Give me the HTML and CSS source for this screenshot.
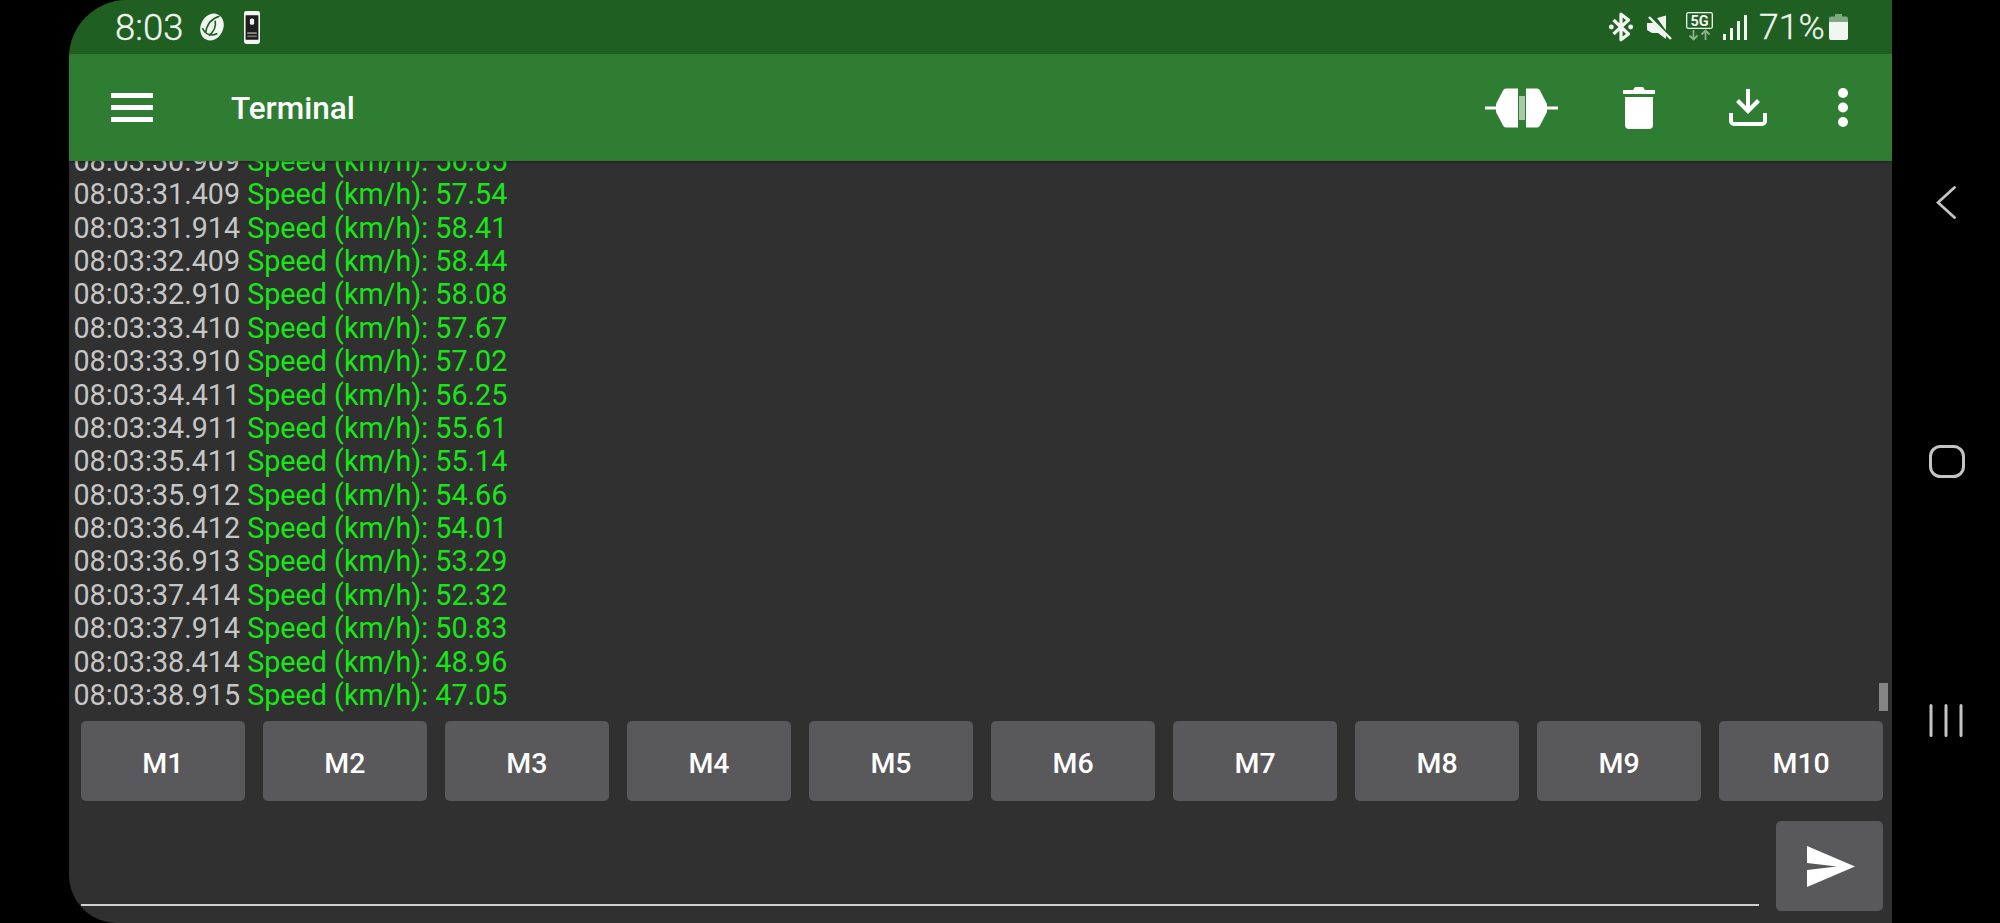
FILE: index.html
```
<!DOCTYPE html>
<html lang="en">
<head>
<meta charset="utf-8">
<title>Terminal</title>
<link rel="stylesheet" href="styles.css">
</head>
<body>
<div class="device">
  <main class="screen">
    <div class="statusbar">
      <span class="clock">8:03</span>
      <svg class="ic-leaf" viewBox="0 0 24 28"><ellipse cx="12" cy="14" rx="10.500" ry="13" transform="rotate(25 12 14)" fill="#f2f6f0"/><path d="M19 4C12 6 7 11 6 20M15 8c1 6-2 11-6 14M3 15c3 6 8 8 14 5" fill="none" stroke="#1f5f22" stroke-width="1.500"/></svg>
      <svg class="ic-phone" viewBox="0 0 15 31"><rect width="15" height="31" rx="2" fill="#f4f4f2"/><rect x="1.500" y="4" width="12" height="23" fill="#1d1d1d"/><rect x="5.500" y="7" width="4" height="6" rx="1.500" fill="#eee"/><rect x="3" y="20" width="9" height="1.500" fill="#999"/><rect x="3" y="23" width="9" height="1.500" fill="#777"/></svg>
      <span class="status-spacer"></span>
      <svg class="ic-bt" viewBox="0 0 24 28"><path d="M5 7.500l14 13-7 5.500V2l7 5.500L5 20.500" fill="none" stroke="#f2f6f0" stroke-width="3" stroke-linejoin="round"/><circle cx="3" cy="14" r="2.300" fill="#f2f6f0"/><circle cx="21" cy="14" r="2.300" fill="#f2f6f0"/></svg>
      <svg class="ic-mute" viewBox="0 0 25 25"><path d="M0 8h5L6 7l13 13v4l-8-6H5l-5-3zM10 3l9-2.500v15z" fill="#f2f6f0"/><path d="M2 2l22 22" stroke="#f2f6f0" stroke-width="2.400"/></svg>
      <svg class="ic-5g" viewBox="0 0 27 29"><rect x=".7" y=".7" width="25.600" height="15.600" rx="1.500" fill="none" stroke="#f2f6f0" stroke-width="1.300"/><text x="13.500" y="14" text-anchor="middle" class="fiveg">5G</text><path d="M7.500 18v9M3.500 23.500l4 4 4-4M19.500 28v-9M15.500 22.500l4-4 4 4" fill="none" stroke="#8db28e" stroke-width="1.800"/></svg>
      <svg class="ic-signal" viewBox="0 0 24 25"><rect x="0" y="19" width="3" height="6" fill="#f2f6f0"/><rect x="7" y="13" width="3" height="12" fill="#f2f6f0"/><rect x="14" y="6" width="3" height="19" fill="#f2f6f0"/><rect x="21" y="0" width="3" height="25" fill="#f2f6f0"/></svg>
      <span class="battery-text">71%</span>
      <svg class="ic-battery" viewBox="0 0 19 26"><path d="M6 0h7v2.500h4a2 2 0 0 1 2 2V8H0V4.500a2 2 0 0 1 2-2h4z" fill="#7fa981"/><path d="M0 8h19v16a2 2 0 0 1-2 2H2a2 2 0 0 1-2-2z" fill="#f2f6f0"/></svg>
    </div>
    <header class="toolbar">
      <svg class="ic-menu" viewBox="0 0 42 29"><path d="M0 0h42v5H0zM0 12h42v5H0zM0 24h42v5H0z" fill="#fff"/></svg>
      <h1 class="title">Terminal</h1>
      <span class="status-spacer"></span>
      <svg class="ic-connect" viewBox="0 0 73 40"><path d="M0 18.500h11v3H0zM62 18.500h11v3H62z" fill="#fff"/><path d="M11 16l7-13.500q1-2 3-2h12v39H21q-2 0-3-2L11 24zM62 16L55 2.500q-1-2-3-2H41v39h11q2 0 3-2l7-13.500z" fill="#fff"/><rect x="34" y="8" width="6" height="24" fill="#a7c8a9"/></svg>
      <svg class="ic-trash" viewBox="0 0 32 42"><path d="M0 3h10l2-3h8l2 3h10v4H0zM2 10h28v28a4 4 0 0 1-4 4H6a4 4 0 0 1-4-4z" fill="#fff"/></svg>
      <svg class="ic-download" viewBox="0 0 38 37"><path d="M17 0h4v17l7-7 3 3-12 12L7 13l3-3 7 7z" fill="#fff"/><path d="M2 24v8a3 3 0 0 0 3 3h28a3 3 0 0 0 3-3v-8" fill="none" stroke="#fff" stroke-width="4"/></svg>
      <svg class="ic-dots" viewBox="0 0 10 39"><circle cx="5" cy="5" r="5" fill="#fff"/><circle cx="5" cy="19.500" r="5" fill="#fff"/><circle cx="5" cy="34" r="5" fill="#fff"/></svg>
    </header>
    <section class="log">
      <p class="line"><span class="ts">08:03:30.909</span> <span class="msg">Speed (km/h): 56.85</span></p>
      <p class="line"><span class="ts">08:03:31.409</span> <span class="msg">Speed (km/h): 57.54</span></p>
      <p class="line"><span class="ts">08:03:31.914</span> <span class="msg">Speed (km/h): 58.41</span></p>
      <p class="line"><span class="ts">08:03:32.409</span> <span class="msg">Speed (km/h): 58.44</span></p>
      <p class="line"><span class="ts">08:03:32.910</span> <span class="msg">Speed (km/h): 58.08</span></p>
      <p class="line"><span class="ts">08:03:33.410</span> <span class="msg">Speed (km/h): 57.67</span></p>
      <p class="line"><span class="ts">08:03:33.910</span> <span class="msg">Speed (km/h): 57.02</span></p>
      <p class="line"><span class="ts">08:03:34.411</span> <span class="msg">Speed (km/h): 56.25</span></p>
      <p class="line"><span class="ts">08:03:34.911</span> <span class="msg">Speed (km/h): 55.61</span></p>
      <p class="line"><span class="ts">08:03:35.411</span> <span class="msg">Speed (km/h): 55.14</span></p>
      <p class="line"><span class="ts">08:03:35.912</span> <span class="msg">Speed (km/h): 54.66</span></p>
      <p class="line"><span class="ts">08:03:36.412</span> <span class="msg">Speed (km/h): 54.01</span></p>
      <p class="line"><span class="ts">08:03:36.913</span> <span class="msg">Speed (km/h): 53.29</span></p>
      <p class="line"><span class="ts">08:03:37.414</span> <span class="msg">Speed (km/h): 52.32</span></p>
      <p class="line"><span class="ts">08:03:37.914</span> <span class="msg">Speed (km/h): 50.83</span></p>
      <p class="line"><span class="ts">08:03:38.414</span> <span class="msg">Speed (km/h): 48.96</span></p>
      <p class="line"><span class="ts">08:03:38.915</span> <span class="msg">Speed (km/h): 47.05</span></p>
      <div class="scrollbar"></div>
    </section>
    <div class="macros">
      <button class="macro">M1</button>
      <button class="macro">M2</button>
      <button class="macro">M3</button>
      <button class="macro">M4</button>
      <button class="macro">M5</button>
      <button class="macro">M6</button>
      <button class="macro">M7</button>
      <button class="macro">M8</button>
      <button class="macro">M9</button>
      <button class="macro">M10</button>
    </div>
    <div class="composer">
      <div class="input"></div>
      <button class="send"><svg class="ic-send" viewBox="0 0 48 41"><path d="M0 0l48 20.500L0 41V24l30-3.500L0 17z" fill="#fff"/></svg></button>
    </div>
  </main>
  <nav class="navbar">
    <svg class="ic-back" viewBox="0 0 20 33"><path d="M18.500 1.500L2 16.500l16.500 15" fill="none" stroke="#c4c4c4" stroke-width="2.800" stroke-linecap="round"/></svg>
    <svg class="ic-home" viewBox="0 0 36 33"><rect x="1.500" y="1.500" width="33" height="30" rx="10" fill="none" stroke="#c4c4c4" stroke-width="3"/></svg>
    <svg class="ic-recent" viewBox="0 0 34 33"><path d="M2 1.500v30M17 1.500v30M32 1.500v30" fill="none" stroke="#c4c4c4" stroke-width="3" stroke-linecap="round"/></svg>
  </nav>
</div>
</body>
</html>
```

FILE: styles.css
```
* { box-sizing: border-box; }
html, body { margin: 0; height: 100%; background: #000; overflow: hidden; }
body { font-family: Roboto, "Noto Sans", sans-serif; }
.device { display: flex; height: 923px; padding-left: 69px; }
.screen {
  width: 1823px; height: 923px; display: flex; flex-direction: column;
  background: #303030; border-radius: 58px 0 0 48px; overflow: hidden;
}
.statusbar {
  flex: 0 0 54px; display: flex; align-items: center; background: #1f5f22;
  padding: 0 44px 0 46px; color: #f2f6f0;
}
.status-spacer { flex: 1; }
.clock { font-size: 36.500px; font-weight: 300; width: 84px; -webkit-text-stroke: .3px #f2f6f0; }
.ic-leaf { width: 26px; height: 30px; margin-right: 19px; }
.ic-phone { width: 16px; height: 33px; }
.ic-bt { width: 26px; height: 30px; }
.ic-mute { width: 25px; height: 25px; margin-left: 13px; }
.ic-5g { width: 27px; height: 29px; margin-left: 14px; margin-top: -1px; }
.fiveg { font: 700 14.500px Roboto, sans-serif; fill: #f2f6f0; }
.ic-signal { width: 24px; height: 25px; margin-left: 10px; }
.battery-text { font-size: 35.500px; font-weight: 300; margin-left: 12px; width: 70px; -webkit-text-stroke: .3px #f2f6f0; }
.ic-battery { width: 19px; height: 26px; }
.toolbar {
  flex: 0 0 107px; display: flex; align-items: center; background: #2f7d33;
  padding: 0 44px 0 42px; color: #fff; box-shadow: 0 1px 2px rgba(0,0,0,.35); z-index: 1;
}
.ic-menu { width: 42px; height: 29px; }
.title { margin: 2px 0 0 78px; font-size: 31.500px; font-weight: 500; }
.ic-connect { width: 73px; height: 40px; }
.ic-trash { width: 32px; height: 42px; margin-left: 65px; }
.ic-download { width: 38px; height: 37px; margin-left: 74px; }
.ic-dots { width: 10px; height: 39px; margin-left: 71px; }
.log {
  position: relative; height: 552px; overflow: hidden; padding: 0 0 .6px 4.500px;
  display: flex; flex-direction: column; justify-content: flex-end;
}
.line { margin: 0; flex: none; font-size: 28.700px; line-height: 33.400px; white-space: pre; height: 33.400px; }
.ts { color: #c6c6c6; }
.msg { color: #17e617; }
.scrollbar { position: absolute; right: 4px; bottom: 2px; width: 9px; height: 28px; background: #858585; }
.macros { display: grid; grid-template-columns: repeat(10, 1fr); gap: 18.400px; padding: 8px 9px 0 12px; }
.macro {
  height: 80px; border: 0; border-radius: 5px; background: #59595b; color: #fff;
  font: 500 28.500px Roboto, sans-serif; padding: 4px 0 0;
}
.composer { display: flex; flex: 1; padding: 20px 9px 0 12px; }
.input { flex: 1; height: 85px; border-bottom: 2px solid #d0d0d0; margin-right: 17px; }
.send { width: 107px; height: 90px; border: 0; border-radius: 5px; background: #59595b; padding: 0 0 0 3px; display: flex; align-items: center; justify-content: center; }
.ic-send { width: 48px; height: 41px; }
.navbar {
  flex: 1; display: flex; flex-direction: column; align-items: center;
  padding: 186px 0 0 2px; gap: 226px;
}
.ic-back { width: 20px; height: 33px; margin-right: 2px; }
.ic-home { width: 36px; height: 33px; }
.ic-recent { width: 34px; height: 33px; margin-right: 2px; }
```
